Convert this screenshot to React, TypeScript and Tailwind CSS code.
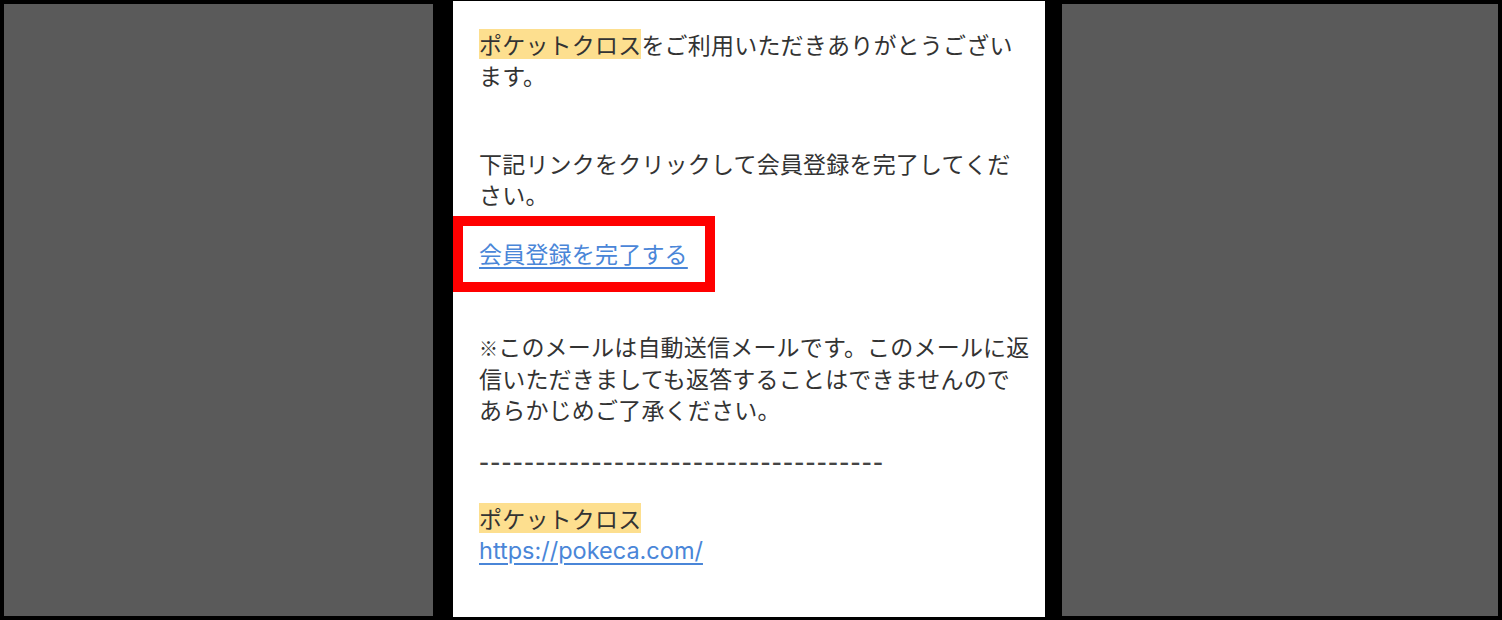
export default function App() {
  const jp = "font-['Noto_Sans_CJK_JP','Noto_Sans',sans-serif]";
  return (
    <div className="flex h-[620px] w-[1502px] items-start bg-black">
      {/* left grey panel */}
      <div className="ml-[4px] mt-[4px] h-[612px] w-[429px] bg-[#5a5a5a]" />

      {/* mail body */}
      <div
        className={`ml-[20px] mt-[1px] flex h-[616px] w-[592px] flex-col bg-white pt-[28px] text-[23px] leading-[31px] tracking-[0.2px] text-[#333333] ${jp}`}
      >
        <p className="whitespace-nowrap pl-[26px]">
          <span className="inline-block bg-[#fddf8f] leading-[30px]">ポケットクロス</span>
          をご利用いただきありがとうござい
          <br />
          ます。
        </p>

        <p className="mt-[57px] whitespace-nowrap pl-[26px]">
          下記リンクをクリックして会員登録を完了してくだ
          <br />
          さい。
        </p>

        <div className="mt-[6px] h-[76px] w-[262px] border-[10px] border-[#ff0000] pl-[16px] pt-[12px]">
          <a href="#" className="whitespace-nowrap text-[#4a86d8] underline underline-offset-[4px] decoration-[1.5px]">
            会員登録を完了する
          </a>
        </div>

        <p className="mt-[39px] whitespace-nowrap pl-[26px]">
          <span className="text-[19px]">※</span>このメールは自動送信メールです。このメールに返
          <br />
          信いただきましても返答することはできませんので
          <br />
          あらかじめご了承ください。
        </p>

        <p className="mt-[21px] h-[31px] whitespace-nowrap pl-[26px] font-['Liberation_Sans',sans-serif] text-[30px] leading-[31px] tracking-[1.27px] text-[#444444]">
          ------------------------------------
        </p>

        <div className="mt-[26px] pl-[26px]">
          <span className="inline-block bg-[#fddf8f] leading-[30px]">ポケットクロス</span>
          <br />
          <a
            href="#"
            className="font-['Inter','Liberation_Sans',sans-serif] text-[23.5px] tracking-normal text-[#4a86d8] underline underline-offset-[4px] decoration-[1.5px]"
          >
            https://pokeca.com/
          </a>
        </div>
      </div>

      {/* right grey panel */}
      <div className="ml-[17px] mt-[4px] h-[612px] w-[436px] bg-[#5a5a5a]" />
    </div>
  );
}
